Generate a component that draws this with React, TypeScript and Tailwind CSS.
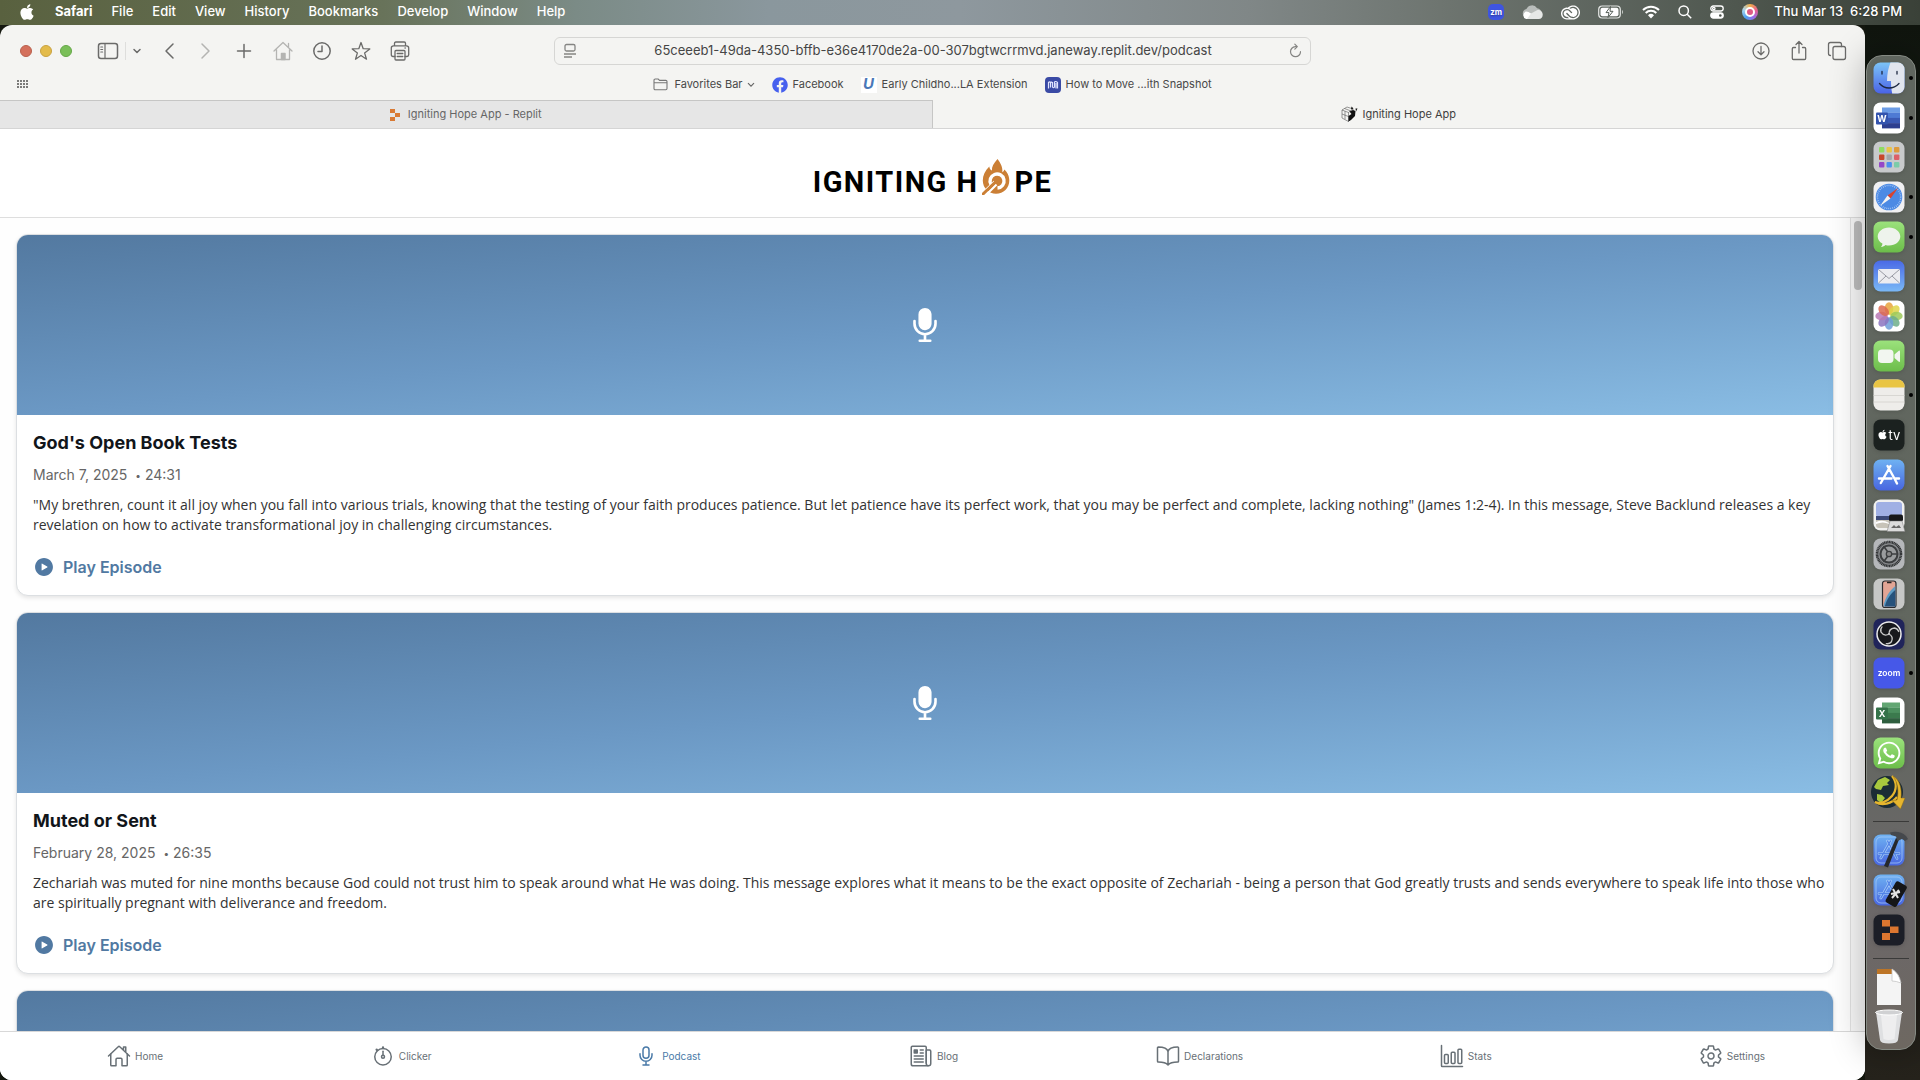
import type { ReactNode } from "react";
import { FaApple, FaFacebook, FaWhatsapp } from "react-icons/fa";
import { SiAdobecreativecloud } from "react-icons/si";
import {
  IoBarChartOutline,
  IoBookOutline,
  IoHomeOutline,
  IoMic,
  IoMicOutline,
  IoNewspaperOutline,
  IoPlayCircle,
  IoSettingsOutline,
  IoStopwatchOutline,
} from "react-icons/io5";

/* ---------- Menu bar ---------- */

const menus = ["File", "Edit", "View", "History", "Bookmarks", "Develop", "Window", "Help"];

function MenuBar() {
  return (
    <header className="flex h-[25px] shrink-0 items-center justify-between bg-[linear-gradient(90deg,#59613f_0%,#68735a_20%,#7b8b86_30%,#8a979d_40%,#8e989e_50%,#808787_65%,#6e7570_75%,#505850_90%,#3a4138_100%)] pr-[18px] pb-px pl-[18px] text-[13px] font-medium text-white [text-shadow:0_1px_2px_rgba(0,0,0,0.35)]">
      <nav aria-label="Menu bar" className="flex items-center gap-[19px]">
        <button aria-label="Apple menu">
          <FaApple size={18} />
        </button>
        <button className="font-bold">Safari</button>
        {menus.map((m) => (
          <button key={m}>{m}</button>
        ))}
      </nav>
      <div className="flex items-center gap-[18px]">
        <span className="flex size-4 items-center justify-center rounded-[5px] bg-[#3f55e0] text-[8px] font-bold">zm</span>
        <svg width="21" height="14" viewBox="0 0 21 14" aria-label="Cloud">
          <path d="M5 13a4.500 4.500 0 0 1-.6-8.900 6 6 0 0 1 10.700-.8A5 5 0 0 1 16 13z" fill="#b9bdbb" />
          <path d="M4 14a4 4 0 0 1 0-7.500c2 0 3 .8 5 2l8.500 5.200z" fill="#fff" />
          <path d="M9 8.500 15 5.200c3-.6 5.700 1.500 5.700 4.600 0 2.400-1.400 4.200-4 4.200H5z" fill="#e6e8e7" />
        </svg>
        <SiAdobecreativecloud size={19} aria-label="Creative Cloud" />
        <svg width="26" height="14" viewBox="0 0 26 14" fill="none" aria-label="Battery">
          <rect x=".7" y="1" width="21.600" height="12" rx="3.500" stroke="#e4e6e4" strokeWidth="1.200" />
          <rect x="2.500" y="2.800" width="18" height="8.400" rx="2" fill="#fff" />
          <path d="M12.500 1.500 8 7.600h3L10 12.500l5-6.200h-3z" fill="#fff" stroke="#565e58" strokeWidth="1" />
          <path d="M24 5v4c1.400-.5 1.400-3.500 0-4z" fill="#c8ccc8" />
        </svg>
        <svg width="18" height="14" viewBox="0 0 18 14" fill="none" stroke="#fff" strokeWidth="2" aria-label="Wi-Fi">
          <path d="M1 5a11.500 11.500 0 0 1 16 0M3.700 8a7.600 7.600 0 0 1 10.600 0" />
          <path d="m9 13.500 3-3.200a4.300 4.300 0 0 0-6 0z" fill="#fff" stroke="none" />
        </svg>
        <svg width="14" height="14" viewBox="0 0 14 14" fill="none" stroke="#fff" strokeWidth="1.500" aria-label="Search">
          <circle cx="5.700" cy="5.700" r="4.700" />
          <path d="m9.200 9.200 4 4" />
        </svg>
        <svg width="14" height="14" viewBox="0 0 14 14" fill="none" stroke="#fff" strokeWidth="1.300" aria-label="Control Center">
          <rect x=".8" y="1" width="12.400" height="5" rx="2.500" />
          <circle cx="3.800" cy="3.500" r="1.200" />
          <rect x=".8" y="8" width="12.400" height="5" rx="2.500" fill="#fff" />
          <circle cx="10.300" cy="10.500" r="1.300" fill="#4a514b" stroke="none" />
        </svg>
        <span className="flex size-4 items-center justify-center rounded-full bg-[conic-gradient(#f2b04c,#e85f8c,#9a6be8,#4da0f2,#a8d5f0,#f2b04c)]">
          <span className="size-[10px] rounded-full border-2 border-white bg-[#dd5b86]" />
        </span>
        <span className="-ml-0.5 whitespace-pre">Thu Mar 13  6:28 PM</span>
      </div>
    </header>
  );
}

/* ---------- Safari toolbar ---------- */

function ToolIcon({ label, w = 22, faded, children }: { label: string; w?: number; faded?: boolean; children: ReactNode }) {
  return (
    <button aria-label={label} className={faded ? "text-[#b4b4b2]" : "text-[#6b6b6a]"}>
      <svg width={w} height="22" viewBox={`0 0 ${w} 22`} fill="none" stroke="currentColor" strokeWidth="1.500" strokeLinecap="round" strokeLinejoin="round">
        {children}
      </svg>
    </button>
  );
}

function Toolbar() {
  return (
    <div className="grid h-[52px] grid-cols-[1fr_757px_1fr] items-center">
      <div className="flex items-center pl-5">
        <div className="flex gap-2">
          <button aria-label="Close" className="size-3 rounded-full border border-[#b9604d] bg-[#d4705c]" />
          <button aria-label="Minimize" className="size-3 rounded-full border border-[#c9a240] bg-[#e3bb4b]" />
          <button aria-label="Zoom" className="size-3 rounded-full border border-[#65a848] bg-[#7abf59]" />
        </div>
        <div className="flex items-center pl-[25px]">
          <ToolIcon label="Sidebar">
            <rect x="1.500" y="3.500" width="19" height="15" rx="2.500" />
            <path d="M8 3.500v15M3.800 7h1.800M3.800 9.500h1.800M3.800 12h1.800" strokeWidth="1.200" />
          </ToolIcon>
          <span className="ml-[6px] h-[18px] w-px bg-[#dededc]" />
          <span className="ml-[5px] flex">
            <ToolIcon label="Tab groups" w={12}>
              <path d="m3 9.500 3 3 3-3" />
            </ToolIcon>
          </span>
        </div>
        <div className="flex items-center gap-[17px] pl-4">
          <div className="flex gap-[13px]">
            <ToolIcon label="Back">
              <path d="m14 4-7 7 7 7" />
            </ToolIcon>
            <ToolIcon label="Forward" faded>
              <path d="m8 4 7 7-7 7" />
            </ToolIcon>
          </div>
          <ToolIcon label="New tab">
            <path d="M11 4.500v13M4.500 11h13" />
          </ToolIcon>
          <ToolIcon label="Home" faded>
            <path d="m2 11 9-8.500 9 8.500M4.500 9.500v10h13v-10M16.500 7V3.500" strokeWidth="1.300" />
            <path d="M9.500 19.500v-6h3.500v6z" fill="currentColor" />
          </ToolIcon>
          <ToolIcon label="History">
            <circle cx="11" cy="11" r="8.200" />
            <path d="M11 6v5.500H7" />
          </ToolIcon>
          <ToolIcon label="Bookmarks">
            <path d="m11 2.500 2.200 6.200 6.600.2-5.200 4 1.900 6.300-5.500-3.700-5.500 3.700 1.900-6.300-5.200-4 6.600-.2z" strokeWidth="1.300" />
          </ToolIcon>
          <ToolIcon label="Print">
            <path d="M5.500 5.500V3.300c0-.8.500-1.300 1.300-1.300h8.400c.8 0 1.300.5 1.300 1.300v2.200M6 16.500H4c-1 0-1.700-.7-1.700-1.700V8c0-1.300.8-2.200 2.200-2.200h13c1.400 0 2.200.9 2.200 2.200v6.800c0 1-.7 1.700-1.700 1.700h-2" strokeWidth="1.300" />
            <rect x="6" y="10.500" width="10" height="9.500" rx="1" strokeWidth="1.300" />
            <path d="M8.200 13.500h5.600M8.200 16.500h5.600M16 8h.3" strokeWidth="1.300" />
          </ToolIcon>
        </div>
      </div>

      <div className="flex h-7 items-center rounded-md border border-[#d6d6d4] px-2 text-[#858583]">
        <svg width="14" height="16" viewBox="0 0 14 16" fill="none" stroke="currentColor" strokeWidth="1.300" aria-hidden="true">
          <rect x="2" y="1.500" width="10" height="6.500" rx="1.500" />
          <path d="M1 11h12M1 14h8" />
        </svg>
        <input
          type="text"
          aria-label="Address"
          defaultValue="65ceeeb1-49da-4350-bffb-e36e4170de2a-00-307bgtwcrrmvd.janeway.replit.dev/podcast"
          className="min-w-0 flex-1 bg-transparent text-center text-[13px] text-[#454545] outline-none"
        />
        <button aria-label="Reload">
          <svg width="13" height="16" viewBox="0 0 13 16" fill="none" stroke="currentColor" strokeWidth="1.200" strokeLinecap="round" strokeLinejoin="round">
            <path d="M7.500 3.700H6.300a5 5 0 1 0 5.200 5" />
            <path d="m5.800 1.200 2.500 2.500-2.500 2.500" />
          </svg>
        </button>
      </div>

      <div className="flex items-center justify-end gap-4 pr-[17px]">
        <ToolIcon label="Downloads">
          <circle cx="11" cy="11" r="8" strokeWidth="1.300" />
          <path d="M11 6.500v8M8 11.800l3 3 3-3" strokeWidth="1.300" />
        </ToolIcon>
        <ToolIcon label="Share">
          <path d="M7.500 7.500h-2c-.7 0-1.200.5-1.200 1.200v9.600c0 .7.500 1.200 1.200 1.200h11c.7 0 1.200-.5 1.200-1.200V8.700c0-.7-.5-1.200-1.200-1.200h-2M11 13V1.500M8 4.500l3-3 3 3" strokeWidth="1.300" />
        </ToolIcon>
        <ToolIcon label="Tab overview">
          <rect x="7" y="6.500" width="12.500" height="13" rx="2" strokeWidth="1.300" />
          <path d="M4.500 15.500c-1.200 0-2-.8-2-2v-9c0-1.200.8-2 2-2h9c1.200 0 2 .8 2 2v2" strokeWidth="1.300" />
        </ToolIcon>
      </div>
    </div>
  );
}

function BookmarksBar() {
  return (
    <div className="flex h-[23px] items-center px-4 pb-2 text-[11px] text-[#484848]">
      <button aria-label="Show all bookmarks" className="w-4">
        <svg width="13" height="9" viewBox="0 0 13 9" fill="#7b7b7a">
          {[0, 1, 2, 3].map((c) => [0, 1, 2].map((r) => <rect key={`${c}${r}`} x={1 + c * 3} y={r * 3} width="2" height="2" />))}
        </svg>
      </button>
      <div className="flex flex-1 items-center justify-center gap-[17px] pr-4">
        <button className="flex items-center gap-1.5">
          <svg width="15" height="13" viewBox="0 0 15 13" fill="none" stroke="#777" strokeWidth="1.100">
            <path d="M1 10.500V2.200C1 1.500 1.500 1 2.200 1h3l1.400 1.400h6.200c.7 0 1.200.5 1.200 1.200v6.900c0 .7-.5 1.200-1.200 1.200H2.200C1.500 11.700 1 11.200 1 10.500zM1 4.800h13" />
          </svg>
          <span>Favorites Bar</span>
          <svg width="8" height="6" viewBox="0 0 8 6" fill="none" stroke="#666" strokeWidth="1.200" className="-ml-0.5">
            <path d="m1 1.200 3 3 3-3" />
          </svg>
        </button>
        <a href="#facebook" className="flex items-center gap-[5px]">
          <FaFacebook size={16} color="#4660ee" />
          Facebook
        </a>
        <a href="#extension" className="flex items-center gap-[5px]">
          <span className="flex size-4 items-center justify-center bg-white text-[15px] font-bold text-[#4a78b8] italic">U</span>
          Early Childho...LA Extension
        </a>
        <a href="#snapshot" className="flex items-center gap-[5px]">
          <svg width="16" height="16" viewBox="0 0 16 16" fill="none" stroke="#dfe3ff" strokeWidth="1.200">
            <rect width="16" height="16" rx="4" fill="#3a4aa5" stroke="none" />
            <path d="M3.500 11.500V5.500q1-1.200 2 0v5M7.500 5v5q1 1.500 2 0v-5q1-1.200 3 .5v6M5.500 5.500q1-1 2 .5M11 6v5.500" />
          </svg>
          How to Move ...ith Snapshot
        </a>
      </div>
    </div>
  );
}

function Tabs() {
  return (
    <div className="grid h-[29px] grid-cols-2 border-b border-[#d5d5d5] text-[11px]">
      <button className="flex items-center justify-center gap-2 border-t border-r border-[#c6c6c5] bg-[#e6e6e6] text-[#666]">
        <svg width="10" height="12" viewBox="0 0 10 12" fill="#d97a34">
          <path d="M0 0h5v4H0zM5 4h5v4H5zM0 8h5v4H0z" />
        </svg>
        Igniting Hope App - Replit
      </button>
      <button className="flex items-center justify-center gap-1 text-[#3f3f3f]">
        <svg width="17" height="16" viewBox="0 0 17 16" fill="none" stroke="#555" strokeWidth=".6">
          <path d="M1 4 6 1l6 2v8l-4.500 4.500L1 12zM1 4l6.500 2.500L12 3M7.500 6.500v9M4 5.200v8M1 8l6.500 2.500M3.500 2.500 10 5" />
          <path d="m7.500 10 3-2-2-2.500 3.500-1.500 2.500 1-.5 5-4 4-2.500 1.500z" fill="#111" stroke="none" />
          <path d="M10 3.500 10.500.5l2 2zM14.500 2.500h2l-1.500 3z" fill="#111" stroke="none" />
        </svg>
        Igniting Hope App
      </button>
    </div>
  );
}

/* ---------- Podcast page ---------- */

function Logo() {
  return (
    <h1 aria-label="Igniting Hope" className="flex items-end gap-1 font-['Roboto',sans-serif] text-[29px] leading-[26px] font-bold tracking-wider text-black">
      <span>IGNITING H</span>
      <svg width="28" height="36" viewBox="0 0 28 36" aria-hidden="true">
        <path d="M15.500 0c-4 4.500-5.800 7.500-5.600 11.500C8.500 11 7.500 9.500 7.300 7.500 3 11.500.8 16.500.8 21.500A13.300 13.300 0 0 0 14 34.800c7.500 0 13.300-5.800 13.300-13.300 0-5-2.300-8.500-5-11-.3 1.500-1 2.300-2 2.800C21 8.500 18.500 4 15.500 0z" fill="#cb7f35" />
        <path d="M9 25.500A7 7 0 1 1 15.500 29" fill="none" stroke="#fff" strokeWidth="3.400" />
        <path d="M12.500 22.500 0 34.500M14.500 25.500 4 36" stroke="#fff" strokeWidth="2.200" />
        <path d="m15 21.500-14 13.500" stroke="#cb7f35" strokeWidth="3" strokeLinecap="round" />
        <circle cx="15.500" cy="21.500" r="3.300" fill="#cb7f35" />
      </svg>
      <span>PE</span>
    </h1>
  );
}

type Episode = { title: string; date: string; length: string; text: string };

const episodes: (Episode | null)[] = [
  {
    title: "God's Open Book Tests",
    date: "March 7, 2025",
    length: "24:31",
    text: '"My brethren, count it all joy when you fall into various trials, knowing that the testing of your faith produces patience. But let patience have its perfect work, that you may be perfect and complete, lacking nothing" (James 1:2-4). In this message, Steve Backlund releases a key revelation on how to activate transformational joy in challenging circumstances.',
  },
  {
    title: "Muted or Sent",
    date: "February 28, 2025",
    length: "26:35",
    text: "Zechariah was muted for nine months because God could not trust him to speak around what He was doing. This message explores what it means to be the exact opposite of Zechariah - being a person that God greatly trusts and sends everywhere to speak life into those who are spiritually pregnant with deliverance and freedom.",
  },
  null,
];

function EpisodeCard({ episode }: { episode: Episode | null }) {
  return (
    <article className="shrink-0 overflow-hidden rounded-xl border border-[#dcdfe2] bg-white shadow-[0_2px_4px_rgba(0,0,0,0.1)]">
      <div className="flex h-[180px] items-center justify-center bg-linear-to-br from-[#5379a0] via-[#6b98c4] to-[#8abde4] text-white">
        <IoMic size={42} />
      </div>
      {episode && (
        <div className="py-4 pr-1 pl-4">
          <h2 className="text-[18px] leading-6 font-bold text-[#11151a]">{episode.title}</h2>
          <p className="mt-[10px] flex items-center text-[14px] leading-5 text-[#666]">
            {episode.date}
            <span className="mr-1 ml-2 text-[10px]">•</span>
            {episode.length}
          </p>
          <p className="mt-[10px] font-['Open_Sans',sans-serif] text-[14px] leading-5 text-[#333]">{episode.text}</p>
          <button className="mt-5 flex h-6 items-center gap-2 text-[16px] font-semibold text-[#5179a2]">
            <IoPlayCircle size={22} />
            Play Episode
          </button>
        </div>
      )}
    </article>
  );
}

const sections = [
  { name: "Home", Icon: IoHomeOutline },
  { name: "Clicker", Icon: IoStopwatchOutline },
  { name: "Podcast", Icon: IoMicOutline },
  { name: "Blog", Icon: IoNewspaperOutline },
  { name: "Declarations", Icon: IoBookOutline },
  { name: "Stats", Icon: IoBarChartOutline },
  { name: "Settings", Icon: IoSettingsOutline },
];

function PodcastPage() {
  return (
    <div className="flex min-h-0 flex-1 flex-col bg-white">
      <div className="flex h-[89px] shrink-0 items-center justify-center border-b border-[#dedede] pt-2">
        <Logo />
      </div>
      <div className="flex min-h-0 flex-1">
        <main className="flex min-w-0 flex-1 flex-col gap-4 overflow-hidden bg-[#fefefe] p-4">
          {episodes.map((e, i) => (
            <EpisodeCard key={i} episode={e} />
          ))}
        </main>
        <div className="w-[15px] border-l border-[#e2e2e2] bg-[#f8f8f8] px-[3px] pt-[3px]">
          <div className="h-[69px] rounded-full bg-[#bdbdbd]" />
        </div>
      </div>
      <nav aria-label="Sections" className="flex h-[49px] shrink-0 border-t border-[#d8d8d8] bg-white pl-0.5 text-[10px] text-[#687076]">
        {sections.map(({ name, Icon }) => (
          <a
            key={name}
            href={`#${name.toLowerCase()}`}
            className={name === "Podcast" ? "flex flex-1 items-center justify-center gap-1 text-[#4a7aa8]" : "flex flex-1 items-center justify-center gap-1"}
          >
            <Icon size={24} />
            {name}
          </a>
        ))}
      </nav>
    </div>
  );
}

/* ---------- Dock ---------- */

function AppIcon({ label, bg = "#fff", children }: { label: string; bg?: string; children: ReactNode }) {
  return (
    <svg width="32" height="32" viewBox="0 0 32 32" className="overflow-visible drop-shadow-sm" role="img" aria-label={label}>
      <rect x=".5" y=".5" width="31" height="31" rx="7" fill={bg} />
      {children}
    </svg>
  );
}

const petals = ["#e8a33d", "#dfd54a", "#9cc95a", "#6dae8a", "#6f9fd8", "#8b74c0", "#b878b4", "#dc6a50"];
const tiles = ["#8fdc62", "#e8c548", "#dd9a3c", "#c8482c", "#a4a6a8", "#dd6068", "#9448c8", "#4c90ee", "#7ccca8"];

function AppStoreGlyph({ color, width }: { color: string; width: number }) {
  return (
    <path d="m14.500 7 7.500 13.500 2 4M17.500 7 9.500 21l-1.700 3M6 19.500h12.500M22 19.500h4" stroke={color} strokeWidth={width} strokeLinecap="round" fill="none" />
  );
}

function OfficeIcon({ label, letter, shades }: { label: string; letter: string; shades: string[] }) {
  return (
    <AppIcon label={label}>
      {shades.slice(0, 4).map((s, i) => (
        <rect key={s} x="9" y={5.500 + i * 5.200} width="18" height="5.300" fill={s} />
      ))}
      <rect x="3" y="10.500" width="12" height="12" rx="1" fill={shades[4]} />
      <text x="9" y="19.800" textAnchor="middle" fontSize="9" fontWeight="bold" fill="#fff">
        {letter}
      </text>
    </AppIcon>
  );
}

const dockApps: { icon: ReactNode; running?: boolean }[] = [
  {
    running: true,
    icon: (
      <AppIcon label="Finder" bg="url(#finder)">
        <path d="M17.500.5c-2 5-3.500 11-3.500 18.500h4c0 4 .4 8.500 1.200 12.500H25a6.500 6.500 0 0 0 6.500-6.500V7A6.500 6.500 0 0 0 25 .5z" fill="#e1e5ee" />
        <path d="M9 9.500v2.500M24 9.500v2.500M6.500 21.500c5 6 14 6 19.500 0" stroke="#1c2740" strokeWidth="1.300" strokeLinecap="round" fill="none" />
      </AppIcon>
    ),
  },
  { running: true, icon: <OfficeIcon label="Word" letter="W" shades={["#6d9de6", "#4e7ad4", "#3a59b4", "#2d3f90", "#3454ae"]} /> },
  {
    icon: (
      <AppIcon label="Launchpad" bg="#c8cacb">
        {tiles.map((c, i) => (
          <rect key={c} x={6 + (i % 3) * 7.500} y={6 + Math.floor(i / 3) * 7.500} width="5.400" height="5.400" rx="1" fill={c} />
        ))}
      </AppIcon>
    ),
  },
  {
    running: true,
    icon: (
      <AppIcon label="Safari" bg="#f0f0f2">
        <circle cx="16" cy="16" r="13.300" fill="#4c8ae4" />
        <circle cx="16" cy="16" r="11.600" fill="none" stroke="#cfe2fa" strokeWidth="1.500" strokeDasharray=".6 1.400" />
        <path d="m25 7-7.500 10.500-3-3z" fill="#d9432f" />
        <path d="m7 25 7.500-10.500 3 3z" fill="#f3f3f3" />
      </AppIcon>
    ),
  },
  {
    running: true,
    icon: (
      <AppIcon label="Messages" bg="url(#green)">
        <path d="M16 6.500c6.300 0 11.300 4 11.300 9s-5 9-11.300 9c-1.200 0-2.400-.1-3.500-.5-1 1-2.500 1.800-4.500 1.900 1-.9 1.400-2 1.400-3.300-3-1.600-4.700-4.200-4.700-7.100 0-5 5-9 11.300-9z" fill="#eef3ec" />
      </AppIcon>
    ),
  },
  {
    icon: (
      <AppIcon label="Mail" bg="url(#mail)">
        <rect x="5" y="9" width="22" height="14.500" rx="1.500" fill="#ececf0" />
        <path d="m5.500 9.500 10.500 9 10.500-9M5.500 23l7.500-7M26.500 23 19 16" stroke="#9a9ba4" strokeWidth="1" fill="none" />
      </AppIcon>
    ),
  },
  {
    icon: (
      <AppIcon label="Photos">
        {petals.map((c, i) => (
          <ellipse key={c} cx="16" cy="8.500" rx="4.300" ry="6.200" fill={c} opacity=".85" transform={`rotate(${i * 45} 16 16)`} />
        ))}
      </AppIcon>
    ),
  },
  {
    icon: (
      <AppIcon label="FaceTime" bg="url(#green)">
        <rect x="5" y="9.500" width="15.500" height="13.500" rx="4" fill="#f2f6f0" />
        <path d="m21.500 14.500 4-3.500q1.500-1 1.500.5v9.500q0 1.500-1.500.5l-4-3.500z" fill="#f2f6f0" />
      </AppIcon>
    ),
  },
  {
    running: true,
    icon: (
      <AppIcon label="Notes" bg="#eeedea">
        <path d="M.5 8.500V7A6.500 6.500 0 0 1 7 .5h18A6.500 6.500 0 0 1 31.500 7v1.500z" fill="#e9c544" />
        <path d="M.5 16.500h31M.5 23h31" stroke="#d2d1cd" strokeWidth=".8" />
      </AppIcon>
    ),
  },
  {
    icon: (
      <AppIcon label="TV" bg="#1b211f">
        <FaApple x="4" y="10" size={11} color="#fff" />
        <text x="21.500" y="20.500" textAnchor="middle" fontSize="13" fill="#fff">
          tv
        </text>
      </AppIcon>
    ),
  },
  {
    icon: (
      <AppIcon label="App Store" bg="url(#store)">
        <AppStoreGlyph color="#fff" width={2.400} />
      </AppIcon>
    ),
  },
  {
    icon: (
      <AppIcon label="Preview" bg="#f1f1ef">
        <rect x="3" y="3" width="26" height="15" rx="3" fill="#a0b0e4" />
        <path d="M3 17h26v4H3z" fill="#3c4a78" />
        <path d="M3 21h26v5c0 2-1 3-3 3H6c-2 0-3-1-3-3z" fill="#c7c3b8" />
        <path d="M3 23q7-3 13 1t13-1v2q-7 3-13 0T3 25z" fill="#fff" />
        <rect x="16" y="15.500" width="14" height="7" rx="2" fill="#17181a" />
        <path d="M17 22h12l3 10.500H14z" fill="#dcdcdc" stroke="#777" strokeWidth=".5" />
        <path d="m18 29 3-3 2 2 3-2 2 3z" fill="#666" />
      </AppIcon>
    ),
  },
  {
    icon: (
      <AppIcon label="System Settings" bg="#b5b7ba">
        <circle cx="16" cy="16" r="12" fill="#8a8c8f" stroke="#333537" strokeWidth="2.600" strokeDasharray="1.200 .4" />
        <circle cx="16" cy="16" r="8.500" fill="#9a9c9e" stroke="#3c3e40" strokeWidth="2" />
        <circle cx="16" cy="16" r="2.700" fill="#888" stroke="#3c3e40" strokeWidth="1.300" />
        <path d="m14.500 13.500-4-5.500M19 16h6M14.500 18.500l-4 5.500" stroke="#3c3e40" strokeWidth="1.600" />
      </AppIcon>
    ),
  },
  {
    icon: (
      <AppIcon label="iPhone Mirroring" bg="#c6c7c6">
        <rect x="9.500" y="3" width="13.500" height="26.500" rx="2.500" fill="#e2a595" stroke="#2b2c30" strokeWidth="1.200" />
        <path d="M22.300 8c-6 5-10 11-12 20.500h12z" fill="#5f9cc4" />
        <path d="M22.300 12c-5 4-8.500 9-10.500 16.500h10.500z" fill="#26527c" />
        <path d="M14 4.500h4.500" stroke="#222" strokeWidth="1.500" />
      </AppIcon>
    ),
  },
  {
    icon: (
      <AppIcon label="OBS" bg="#20245a">
        <circle cx="16" cy="16" r="12" fill="#17181c" stroke="#ececec" strokeWidth="1.500" />
        {[0, 120, 240].map((a) => (
          <path key={a} d="M16 16.500c-.2-3.500 1.500-6.200 5.500-6.500 2 .3 3.500 1.500 4.200 3.500" fill="none" stroke="#c9c9c9" strokeWidth="1.300" strokeLinecap="round" transform={`rotate(${a} 16 16)`} />
        ))}
      </AppIcon>
    ),
  },
  {
    running: true,
    icon: (
      <AppIcon label="Zoom" bg="#4658e8">
        <text x="16" y="18.500" textAnchor="middle" fontSize="8.500" fontWeight="600" fill="#fff">
          zoom
        </text>
      </AppIcon>
    ),
  },
  { icon: <OfficeIcon label="Excel" letter="X" shades={["#62a673", "#4b8f5e", "#3b7a4d", "#2f5f3f", "#35734a"]} /> },
  {
    icon: (
      <AppIcon label="WhatsApp" bg="url(#green)">
        <FaWhatsapp x="3" y="3" size={26} color="#fff" />
      </AppIcon>
    ),
  },
  {
    icon: (
      <svg width="36" height="36" viewBox="0 0 36 36" role="img" aria-label="Download manager">
        <circle cx="16" cy="17" r="16" fill="#1b2c35" />
        <path d="M3 12 7 5l7-3 5 3-3 3 2 2-6 1-2 4-5-1zM6 19l5 1 3 3-4 5-4-3z" fill="#a8c83e" />
        <path d="M21 1c5 6 5 14 0 20S9 29 4 27c7 4 17 2 22-5" fill="none" stroke="#e6b52e" strokeWidth="2.200" />
        <path d="M22 1c7 4 9 13 8 22l4 0-4.500 11-8.500-8.500 5-.5c2-9 1-17-4-24z" fill="#e6b52e" stroke="#8c6a14" strokeWidth=".5" />
      </svg>
    ),
  },
];

function BlueprintApp({ label, children }: { label: string; children: ReactNode }) {
  return (
    <AppIcon label={label} bg="url(#store)">
      <rect x="3" y="3" width="26" height="26" rx="5" fill="none" stroke="#a9cdf8" strokeWidth=".7" />
      <AppStoreGlyph color="#a9cdf8" width={2.600} />
      <AppStoreGlyph color="#5283e6" width={1.400} />
      {children}
    </AppIcon>
  );
}

const dockRecents: ReactNode[] = [
  <BlueprintApp label="Xcode">
    <path d="m23 4 3 1.500-11 28-4-1.500z" fill="#26282c" />
    <path d="M17-1.500c6-1.500 12-.5 16 3.500l2 3-3 2-3-2-4.500 2-1.500-4.500-5-1.500z" fill="#45484c" />
  </BlueprintApp>,
  <BlueprintApp label="Simulator">
    <rect x="17" y="8" width="12.500" height="24" rx="2" fill="#151618" transform="rotate(30 23 20)" />
    <path d="m18 20 9-2M20 15l5 9M26 16l-7 8" stroke="#e3e3e3" strokeWidth="2" />
  </BlueprintApp>,
  <AppIcon label="Replit" bg="#1c1e27">
    <path d="M9 6h8v6.500H9zM17 12.500h8.500V19H17zM9 19h8v7H9z" fill="#dc7630" />
  </AppIcon>,
];

const dockFiles: ReactNode[] = [
  <svg width="26" height="38" viewBox="0 0 26 38" role="img" aria-label="Documents">
    <path d="M1 1h15l9 14v22H1z" fill="#f4f4f4" />
    <path d="M1 1h15v5H1z" fill="#bd7526" />
    <path d="M16 1v12q4 0 9 2-2-10-9-14z" fill="#fff" stroke="#c4c4c4" strokeWidth=".8" />
  </svg>,
  <svg width="30" height="36" viewBox="0 0 30 36" role="img" aria-label="Trash">
    <path d="m2 3 4 28q.5 3.500 9 3.500t9-3.500l4-28z" fill="#dfe0e2" />
    <path d="m7 6 2.500 24q5 2 11 0L23 6z" fill="#eeeeef" />
    <ellipse cx="15" cy="3.500" rx="13.500" ry="2.500" fill="#d0d1d3" stroke="#fff" strokeWidth="1" />
  </svg>,
];

function DockItem({ running, children }: { running?: boolean; children: ReactNode }) {
  return (
    <li className="relative flex min-h-0 flex-1 items-center justify-center pr-1">
      <button className="flex h-0 items-center">{children}</button>
      {running && <span className="absolute right-[2px] size-1 rounded-full bg-black" />}
    </li>
  );
}

function DockDivider() {
  return (
    <li aria-hidden="true" className="flex h-[18px] items-center px-[6px]">
      <span className="h-px flex-1 bg-[#3a3a39]" />
    </li>
  );
}

function Dock() {
  return (
    <aside aria-label="Dock" className="flex w-[55px] shrink-0 bg-[linear-gradient(#10150e,#17201a_30%,#0e150e_50%,#15130f_75%,#26231c)] pt-[30px] pr-1 pb-[30px] pl-px">
      <svg width="0" height="0" className="absolute" aria-hidden="true">
        <defs>
          {[
            ["finder", "#7cc4f8", "#4a63e6"],
            ["green", "#9be27c", "#6cbd4a"],
            ["mail", "#4a6ae6", "#7ab8f6"],
            ["store", "#6fb2f2", "#4866e0"],
          ].map(([id, a, b]) => (
            <linearGradient key={id} id={id} x1="0" y1="0" x2="0" y2="1">
              <stop stopColor={a} />
              <stop offset="1" stopColor={b} />
            </linearGradient>
          ))}
        </defs>
      </svg>
      <ul className="z-10 flex min-w-0 flex-1 flex-col rounded-2xl border border-[#858a83] bg-[linear-gradient(#60665f,#62675f_65%,#6b6769_85%,#6e6861)] py-[2px] shadow-[0_0_36px_rgba(0,0,0,0.3)]">
        {dockApps.map((app, i) => (
          <DockItem key={i} running={app.running}>
            {app.icon}
          </DockItem>
        ))}
        <DockDivider />
        {dockRecents.map((icon, i) => (
          <DockItem key={i}>{icon}</DockItem>
        ))}
        <DockDivider />
        {dockFiles.map((icon, i) => (
          <DockItem key={i}>{icon}</DockItem>
        ))}
      </ul>
    </aside>
  );
}

export default function App() {
  return (
    <div className="flex h-screen flex-col overflow-hidden bg-[#14170f] font-['Inter',sans-serif]">
      <MenuBar />
      <div className="flex min-h-0 flex-1">
        <section aria-label="Safari window" className="flex min-w-0 flex-1 flex-col overflow-hidden rounded-xl bg-[#f4f4f2]">
          <Toolbar />
          <BookmarksBar />
          <Tabs />
          <PodcastPage />
        </section>
        <Dock />
      </div>
    </div>
  );
}
